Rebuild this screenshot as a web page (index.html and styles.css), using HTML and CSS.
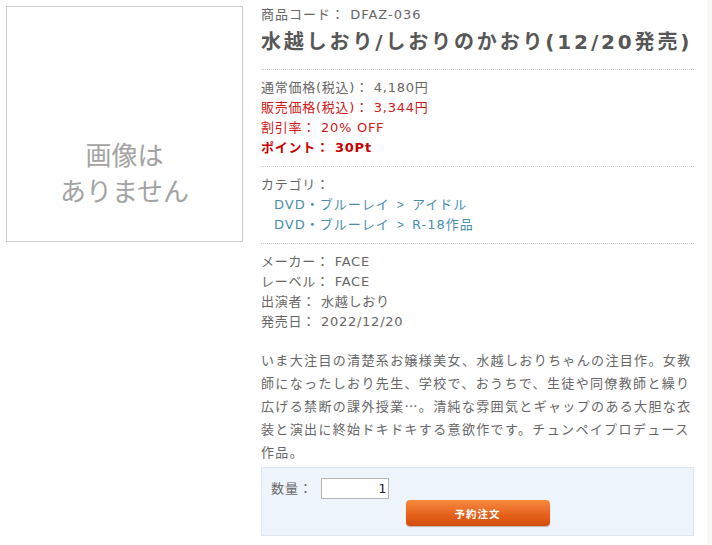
FILE: index.html
```html
<!DOCTYPE html>
<html lang="ja">
<head>
<meta charset="utf-8">
<title>水越しおり/しおりのかおり(12/20発売)</title>
<link rel="stylesheet" href="styles.css">
</head>
<body>
<div class="page">
  <div class="content">
    <div class="photo">
      <span>画像は</span>
      <span>ありません</span>
    </div>
    <div class="detail">
      <div class="code">商品コード： DFAZ-036</div>
      <h1 class="title">水越しおり/しおりのかおり(12/20発売)</h1>
      <div class="section">
        <div class="row">通常価格(税込)： 4,180円</div>
        <div class="row red">販売価格(税込)： 3,344円</div>
        <div class="row red">割引率： 20% OFF</div>
        <div class="row red bold">ポイント： 30Pt</div>
      </div>
      <div class="section">
        <div class="row">カテゴリ：</div>
        <div class="row cat"><a href="#">DVD・ブルーレイ <span class="sep">&gt;</span> アイドル</a></div>
        <div class="row cat"><a href="#">DVD・ブルーレイ <span class="sep">&gt;</span> R-18作品</a></div>
      </div>
      <div class="section last">
        <div class="row">メーカー： FACE</div>
        <div class="row">レーベル： FACE</div>
        <div class="row">出演者： 水越しおり</div>
        <div class="row">発売日： 2022/12/20</div>
      </div>
      <p class="desc">いま大注目の清楚系お嬢様美女、水越しおりちゃんの注目作。女教師になったしおり先生、学校で、おうちで、生徒や同僚教師と繰り広げる禁断の課外授業…。清純な雰囲気とギャップのある大胆な衣装と演出に終始ドキドキする意欲作です。チュンペイプロデュース作品。</p>
      <form class="cart">
        <div class="qty-row">
          <label class="qty-label" for="qty">数量：</label>
          <input class="qty" id="qty" type="text" value="1">
        </div>
        <button class="order" type="button">予約注文</button>
      </form>
    </div>
  </div>
  <div class="edge"></div>
</div>
</body>
</html>
```

FILE: styles.css
```css
* { box-sizing: border-box; }
html, body { margin: 0; padding: 0; background: #fff; }
body {
  font-family: "DejaVu Sans", "Noto Sans CJK JP", sans-serif;
  font-size: 13px;
  color: #666;
  letter-spacing: 0.75px;
}
.page {
  display: flex;
  min-height: 100vh;
}
.content {
  display: flex;
  align-items: flex-start;
  gap: 18px;
  padding: 5px 0 0 6px;
}
.photo {
  width: 237px;
  height: 236px;
  margin-top: 1px;
  border: 1px solid #cfcfcf;
  display: flex;
  flex-direction: column;
  align-items: center;
  padding-top: 129px;
  font-family: "Noto Sans CJK JP", sans-serif;
  font-size: 26px;
  line-height: 36px;
  color: #a3a3a3;
  letter-spacing: 0;
}
.detail {
  width: 433px;
}
.code {
  line-height: 20px;
  letter-spacing: 1px;
}
.title {
  margin: 3px 0 0;
  padding-bottom: 13px;
  border-bottom: 1px dotted #c8c8c8;
  font-size: 20px;
  line-height: 28px;
  font-weight: bold;
  color: #575757;
  letter-spacing: 2.85px;
  white-space: nowrap;
}
.section {
  padding: 8px 0 8px;
  border-bottom: 1px dotted #c8c8c8;
}
.section.last {
  border-bottom: none;
  padding-bottom: 0;
}
.row {
  line-height: 20px;
  white-space: nowrap;
}
.red { color: #d01818; }
.bold { font-weight: bold; color: #c80000; }
.cat { padding-left: 13px; letter-spacing: 1px; }
.cat a {
  color: #4a8fae;
  text-decoration: none;
}
.sep {
  font-family: "Liberation Sans", sans-serif;
  font-size: 12px;
  padding: 0 2px;
}
.desc {
  margin: 16px 0 4px;
  font-family: "Noto Sans CJK JP", sans-serif;
  font-size: 13px;
  letter-spacing: 1.35px;
  line-height: 23px;
  color: #666;
}
.cart {
  margin: 0;
  height: 69px;
  border: 1px solid #dbe6f0;
  background: #edf4fc;
  padding: 10px 0 0 9px;
  display: flex;
  flex-direction: column;
}
.qty-row {
  display: flex;
  align-items: center;
  gap: 8px;
}
.qty-label {
  line-height: 21px;
  letter-spacing: 1px;
}
.qty {
  width: 68px;
  height: 21px;
  border: 1px solid #b5b5b5;
  background: #fff;
  text-align: right;
  padding: 0 2px 0 0;
  font-family: "DejaVu Sans Mono", monospace;
  font-size: 13px;
  color: #222;
  letter-spacing: 0;
}
.order {
  align-self: center;
  margin: 1px 0 0 -9px;
  width: 144px;
  height: 26px;
  border: none;
  border-radius: 4px;
  background: linear-gradient(#f88a40, #e4601a 60%, #d14e0c);
  box-shadow: 0 1px 1px rgba(120, 50, 0, 0.35);
  color: #fff;
  font-family: "Noto Sans CJK JP", sans-serif;
  font-size: 10.5px;
  font-weight: bold;
  letter-spacing: 1px;
  padding: 0;
}
.edge {
  margin-left: auto;
  width: 5px;
  background: #f3fbf3;
}
```
